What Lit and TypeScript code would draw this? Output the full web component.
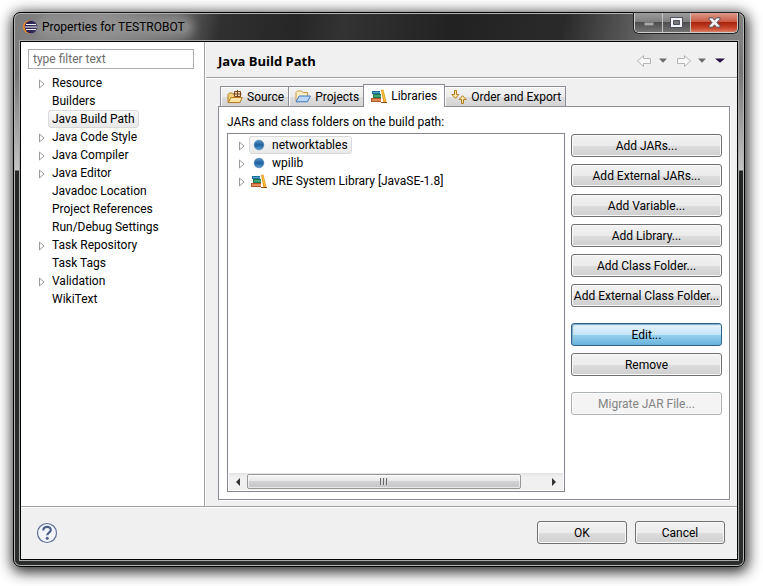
import { LitElement, html, css, svg, nothing } from "lit";
import { customElement } from "lit/decorators.js";
import { classMap } from "lit/directives/class-map.js";

const eclipseIcon = html`<svg class="icon" width="15" height="14" viewBox="0 0 15 14" aria-hidden="true">
  <circle cx="6.500" cy="7" r="6.5" fill="#f08c24" />
  <circle cx="8" cy="7" r="6.300" fill="#2c2255" />
  <path d="M3 4.500h10M2 7h12M3 9.500h10" stroke="#fff" stroke-width="1" />
</svg>`;

const books = html`<svg class="icon" width="16" height="14" viewBox="0 0 16 14" aria-hidden="true">
  <path d="M1 2h8v3H1z" fill="#1f6f9f" /><path d="M2 3h7v1H2z" fill="#4fa3c8" />
  <path d="M2 5h8v4H2z" fill="#1f7a48" /><path d="M3 6h7v2H3z" fill="#3fa578" />
  <path d="M0 9h10v4H0z" fill="#b5562a" /><path d="M1 10h9v2H1z" fill="#e08a58" />
  <path d="M10 1 12.400.5 15.400 12.6 12.400 13.2z" fill="#e8971a" />
  <path d="M11.4 1.4 13.800 12" stroke="#ffc84a" fill="none" />
  <path d="M10 13.500h6" stroke="#8a4b12" />
</svg>`;

const sourceIcon = html`<svg class="icon" width="16" height="14" viewBox="0 0 16 14" aria-hidden="true">
  <path d="M1 12.5V4.5L2.5 3h3L7 4.5h6v8z" fill="#f3cf7c" stroke="#b67a22" />
  <path d="M7.5 1.5h6v5h-6z" fill="#f2d9b4" stroke="#7b4520" />
  <path d="M10.5 0v8M6.5 4h8" stroke="#7b4520" />
  <path d="M1.2 12.6 4 7.500h11.3l-2.5 5.1z" fill="#fbe3a4" stroke="#b67a22" />
</svg>`;

const projectsIcon = html`<svg class="icon" width="16" height="13" viewBox="0 0 16 13" aria-hidden="true">
  <path d="M1 11V2.5L2.5 1h4L8 2.5h4.5V6" fill="#fbeec0" stroke="#c79a45" />
  <path d="M1 11.8 4.2 6h11.2l-3 5.8z" fill="#b9d6fb" stroke="#4378c4" />
</svg>`;

const orderIcon = html`<svg class="icon" width="16" height="14" viewBox="0 0 16 14" aria-hidden="true">
  <path d="M3.500.5h2v4h2.300L4.500 8.300.8 4.500h2.700z" fill="#fdebb0" stroke="#b57a1c" />
  <path d="M10.500 13.500v-4H8.200l3.400-3.800L15.200 9.500h-2.700v4z" fill="#fdebb0" stroke="#b57a1c" />
</svg>`;

const jarIcon = html`<svg class="icon" width="16" height="14" viewBox="0 0 16 14" aria-hidden="true">
  <defs><linearGradient id="ball" x2="0" y2="1">
    <stop stop-color="#5b96c8" /><stop offset=".5" stop-color="#1c5f9e" /><stop offset="1" stop-color="#5ea3d4" />
  </linearGradient></defs>
  <circle cx="8" cy="7" r="4.800" fill="url(#ball)" stroke="#3a74a8" stroke-width=".6" />
</svg>`;

const twisty = html`<svg width="6" height="10" viewBox="0 0 6 10" aria-hidden="true">
  <path d="M.5 1v8L5 5z" fill="#fff" stroke="#9a9a9a" />
</svg>`;

const arrowShape = svg`<path d="M.5 6 6.500.5v3h7v5h-7v3z" fill="#f8f8f8" stroke="#b4b4b4" />`;
const caret = (fill: string, w = 8) => html`<svg width=${w} height="5" viewBox="0 0 8 5" preserveAspectRatio="none" aria-hidden="true">
  <path d="M0 .5h8L4 4.800z" fill=${fill} />
</svg>`;

interface Node { label: string; expandable?: boolean; selected?: boolean; icon?: unknown }

const pages: Node[] = [
  { label: "Resource", expandable: true },
  { label: "Builders" },
  { label: "Java Build Path", selected: true },
  { label: "Java Code Style", expandable: true },
  { label: "Java Compiler", expandable: true },
  { label: "Java Editor", expandable: true },
  { label: "Javadoc Location" },
  { label: "Project References" },
  { label: "Run/Debug Settings" },
  { label: "Task Repository", expandable: true },
  { label: "Task Tags" },
  { label: "Validation", expandable: true },
  { label: "WikiText" },
];

const libraries: Node[] = [
  { label: "networktables", expandable: true, selected: true, icon: jarIcon },
  { label: "wpilib", expandable: true, icon: jarIcon },
  { label: "JRE System Library [JavaSE-1.8]", expandable: true, icon: books },
];

const tabs = [
  { label: "Source", icon: sourceIcon },
  { label: "Projects", icon: projectsIcon },
  { label: "Libraries", icon: books, active: true },
  { label: "Order and Export", icon: orderIcon },
];

const actionGroups = [
  ["Add JARs...", "Add External JARs...", "Add Variable...", "Add Library...", "Add Class Folder...", "Add External Class Folder..."],
  ["Edit...", "Remove"],
  ["Migrate JAR File..."],
];

@customElement("app-root")
export class AppRoot extends LitElement {
  static styles = css`
    :host {
      display: flex;
      box-sizing: border-box;
      min-height: 100vh;
      padding: 12px 18px 19px 13px;
      background: #fff;
      font: 12px/18px Roboto, "Open Sans", sans-serif;
      color: #000;
    }
    * { box-sizing: border-box; }
    svg { display: block; flex: none; }
    button, input { font: inherit; color: inherit; margin: 0; }
    ul { list-style: none; margin: 0; padding: 0; }

    .window {
      flex: 1;
      min-width: 0;
      display: flex;
      flex-direction: column;
      border: 1px solid #000;
      border-radius: 7px;
      box-shadow: inset 0 0 0 1px #b4b6b5, 1px 3px 14px 2px rgba(0, 0, 0, 0.85);
      padding: 0 6px 6px;
      background:
        linear-gradient(100deg, #7c7c7c 0, #8b8b8b 90px, #6a6a6a 160px, #303030 205px, #262626 280px, #333 45%, #222 60%, #2a2a2a 75%, #6e6e6e 88%, #808080 100%) 0 0 / 100% 29px no-repeat,
        linear-gradient(#858585 0, #777 60px, #c4c4c4 157px, #242726 158px, #2b2e2d 100%);
    }
    .titlebar {
      height: 28px;
      display: flex;
      justify-content: space-between;
      padding-left: 3px;
    }
    .caption {
      display: flex;
      align-items: center;
      gap: 4px;
      margin: 0;
      font: inherit;
    }
    .caption span {
      padding: 0 4px 0 0;
      background: rgba(150, 150, 150, 0.7);
      box-shadow: 0 0 8px 5px rgba(150, 150, 150, 0.7);
      line-height: 12px;
      border-radius: 6px;
    }
    .controls {
      display: flex;
      height: 20px;
      border: 1px solid #ccc;
      border-top: 0;
      border-radius: 0 0 5px 5px;
      overflow: hidden;
      box-shadow: 0 0 0 1px #222;
    }
    .controls button {
      width: 28px;
      border: 0;
      border-right: 1px solid #c4c4c4;
      padding: 0;
      display: flex;
      justify-content: center;
      align-items: center;
      background: linear-gradient(#9c9c9c 0, #808080 45%, #4e4e4e 50%, #747474 100%);
    }
    .controls .close {
      width: 46px;
      border-right: 0;
      background: linear-gradient(#dd9a8a 0, #cb5c46 45%, #a8240c 50%, #c9472c 80%, #d88066 100%);
    }

    .client {
      flex: 1;
      display: flex;
      flex-direction: column;
      border: 1px solid #000;
      outline: 1px solid #a9abaa;
      background: #f0f0f0;
    }
    .body {
      flex: 1;
      display: grid;
      grid-template-columns: 184px minmax(0, 1fr);
      border-bottom: 1px solid #a0a0a0;
    }
    .nav {
      background: #fff;
      border-right: 1px solid #a0a0a0;
      padding: 7px 10px 0 7px;
    }
    .filter {
      display: block;
      width: 100%;
      height: 20px;
      border: 1px solid #abadb3;
      padding: 0 4px;
      background: #fff;
      margin-bottom: 5px;
    }
    .filter::placeholder { color: #6d6d6d; opacity: 1; }
    .node { display: flex; align-items: center; height: 18px; padding-left: 11px; white-space: nowrap; }
    .twist { width: 9px; flex: none; padding-top: 2px; }
    .name {
      display: flex;
      align-items: center;
      gap: 5px;
      height: 18px;
      padding: 0 3px;
      border: 1px solid transparent;
      border-radius: 3px;
      line-height: 16px;
    }
    .name.selected { border-color: #d9d9d9; background: linear-gradient(#fafafa, #e8e8e8); }
    .list .node { padding-left: 10px; }
    .list .name { padding: 0 3px 0 1px; }
    .list .twist { width: 10px; }

    .page { border-left: 1px solid #fff; display: flex; flex-direction: column; min-width: 0; }
    .pagehead {
      height: 36px;
      display: flex;
      align-items: center;
      justify-content: space-between;
      padding: 2px 12px 0;
      border-bottom: 1px solid #a0a0a0;
      box-shadow: 0 1px #fff;
    }
    .pagehead h1 { margin: 0; font: 700 13px/18px "Open Sans", sans-serif; }
    .history { display: flex; align-items: center; gap: 7px; }
    .history button { border: 0; padding: 0; background: none; }
    .history .gap { margin-left: 2px; }

    .tabs { display: flex; align-items: flex-end; height: 28px; padding-left: 14px; }
    .tab {
      display: flex;
      align-items: center;
      gap: 4px;
      height: 20px;
      padding: 0 4px 0 6px;
      border: 1px solid #898c95;
      border-bottom: 0;
      margin-right: -1px;
      background: linear-gradient(#f3f3f3 0, #ececec 50%, #dedede 51%, #d4d4d4 100%);
      box-shadow: inset 1px 1px #fff;
      white-space: nowrap;
    }
    .tab.active {
      height: 23px;
      margin-bottom: -1px;
      padding: 0 7px;
      background: #fff;
      position: relative;
    }
    .sheet {
      flex: 1;
      margin: 0 7px 6px 12px;
      border: 1px solid #898c95;
      background: #fff;
      padding: 6px 7px 7px 8px;
      display: flex;
      flex-direction: column;
      box-shadow: 1px 1px #fff;
    }
    .listlabel { margin: 0 0 2px; line-height: 18px; }
    .split { flex: 1; display: flex; gap: 6px; }
    .list {
      flex: 1;
      min-width: 0;
      display: flex;
      flex-direction: column;
      border: 1px solid #828790;
      padding: 1px;
    }
    .list ul { flex: 1; padding-top: 1px; }
    .scroll {
      height: 17px;
      display: flex;
      align-items: center;
      background: linear-gradient(#e3e3e3, #f0f0f0 4px);
    }
    .scroll .end { width: 18px; display: flex; justify-content: center; }
    .track { flex: 1; height: 15px; display: flex; }
    .thumb {
      width: 92%;
      border: 1px solid #979797;
      border-radius: 2px;
      background: linear-gradient(#f6f6f6 0, #e8e8e9 45%, #d2d2d4 50%, #c4c4c7 100%);
      box-shadow: inset 0 0 0 1px rgba(255, 255, 255, 0.6);
      display: flex;
      align-items: center;
      justify-content: center;
    }
    .actions { width: 151px; display: flex; flex-direction: column; gap: 16px; padding-top: 1px; }
    .group { display: flex; flex-direction: column; gap: 7px; }
    .btn {
      height: 23px;
      border: 1px solid #707070;
      border-radius: 3px;
      padding: 0;
      line-height: 20px;
      white-space: nowrap;
      background: linear-gradient(#f2f2f2 0, #ebebeb 50%, #dddddd 51%, #cfcfcf 100%);
      box-shadow: inset 0 0 0 1px #fafafa;
    }
    .btn.hot {
      border-color: #2c628b;
      background: linear-gradient(#e5f4fc 0, #c4e5f6 50%, #98d1ef 51%, #68b3db 100%);
      box-shadow: inset 1px 1px 1px #7fa9c4;
    }
    .btn:disabled { border-color: #adb2b5; background: #f4f4f4; color: #838383; }

    .footer {
      height: 52px;
      border-top: 1px solid #fff;
      display: flex;
      align-items: center;
      gap: 8px;
      padding: 0 12px 2px 15px;
    }
    .footer .btn { width: 90px; }
    .help { border: 0; padding: 0; background: none; margin-right: auto; }
  `;

  private renderNode(node: Node) {
    return html`<li class="node" role="treeitem" aria-selected=${node.selected ? "true" : "false"}>
      <span class="twist">${node.expandable ? twisty : nothing}</span>
      <span class=${classMap({ name: true, selected: !!node.selected })}>${node.icon ?? nothing}<span>${node.label}</span></span>
    </li>`;
  }

  private renderWindowControls() {
    return html`<div class="controls">
      <button aria-label="Minimize"><svg width="12" height="6" viewBox="0 0 12 6">
        <path d="M1.500 2.500h9v3h-9z" fill="#a8a8a8" stroke="#777" /></svg></button>
      <button aria-label="Maximize"><svg width="13" height="12" viewBox="0 0 13 12">
        <path d="M.5.5h12v10H.5z" fill="#f4f4f4" stroke="#4b4f60" />
        <path d="M3.500 3.500h6v4h-6z" fill="#777" stroke="#4b4f60" /></svg></button>
      <button class="close" aria-label="Close"><svg width="13" height="12" viewBox="0 0 13 12">
        <path d="M1 .8h3.600l1.900 2.400L8.400.8H12v1.400L9 5.500l3 3.300v1.400H8.400L6.500 7.800l-1.900 2.400H1V8.800l3-3.300-3-3.300z"
          fill="#f6f6f6" stroke="#514a5c" /></svg></button>
    </div>`;
  }

  render() {
    return html`<main class="window">
      <header class="titlebar">
        <h2 class="caption">${eclipseIcon}<span>Properties for TESTROBOT</span></h2>
        ${this.renderWindowControls()}
      </header>
      <div class="client">
        <div class="body">
          <nav class="nav">
            <input class="filter" type="text" placeholder="type filter text" aria-label="Filter pages" />
            <ul role="tree">${pages.map((p) => this.renderNode(p))}</ul>
          </nav>
          <section class="page">
            <div class="pagehead">
              <h1>Java Build Path</h1>
              <div class="history">
                <button aria-label="Back"><svg width="15" height="12" viewBox="0 0 15 12">${arrowShape}</svg></button>
                <button aria-label="Back history">${caret("#6c6c6c")}</button>
                <button class="gap" aria-label="Forward"><svg width="15" height="12" viewBox="0 0 15 12">
                  <g transform="rotate(180 7.500 6)">${arrowShape}</g></svg></button>
                <button aria-label="Forward history">${caret("#6c6c6c")}</button>
                <button class="gap" aria-label="Menu">${caret("#26124a", 10)}</button>
              </div>
            </div>
            <div class="tabs" role="tablist">
              ${tabs.map((t) => html`<button role="tab" aria-selected=${t.active ? "true" : "false"}
                class=${classMap({ tab: true, active: !!t.active })}>${t.icon}<span>${t.label}</span></button>`)}
            </div>
            <div class="sheet" role="tabpanel">
              <p class="listlabel" id="list-label">JARs and class folders on the build path:</p>
              <div class="split">
                <div class="list">
                  <ul role="tree" aria-labelledby="list-label">${libraries.map((l) => this.renderNode(l))}</ul>
                  <div class="scroll">
                    <span class="end"><svg width="4" height="8" viewBox="0 0 4 8"><path d="M4 0v8L0 4z" fill="#333" /></svg></span>
                    <div class="track"><div class="thumb"><svg width="8" height="7" viewBox="0 0 8 7">
                      <path d="M.5 0v7M3.500 0v7M6.500 0v7" stroke="#666" /><path d="M1.500 0v7M4.500 0v7M7.500 0v7" stroke="#ddd" /></svg></div></div>
                    <span class="end"><svg width="4" height="8" viewBox="0 0 4 8"><path d="M0 0v8l4-4z" fill="#333" /></svg></span>
                  </div>
                </div>
                <div class="actions">
                  ${actionGroups.map((g) => html`<div class="group">${g.map((label) => html`<button
                    class=${classMap({ btn: true, hot: label === "Edit..." })}
                    ?disabled=${label.startsWith("Migrate")}>${label}</button>`)}</div>`)}
                </div>
              </div>
            </div>
          </section>
        </div>
        <footer class="footer">
          <button class="help" aria-label="Help"><svg width="22" height="22" viewBox="0 0 22 22">
            <circle cx="11" cy="11" r="9.500" fill="#f4f5f8" stroke="#5d6f94" stroke-width="1.200" />
            <path d="M7.300 8.400c.1-4.600 7.600-4.500 7.500-.4 0 2.600-3.500 2.600-3.600 5.300" fill="none" stroke="#4d608c" stroke-width="2.200" />
            <circle cx="11.200" cy="16.300" r="1.500" fill="#4d608c" /></svg></button>
          <button class="btn">OK</button>
          <button class="btn">Cancel</button>
        </footer>
      </div>
    </main>`;
  }
}
